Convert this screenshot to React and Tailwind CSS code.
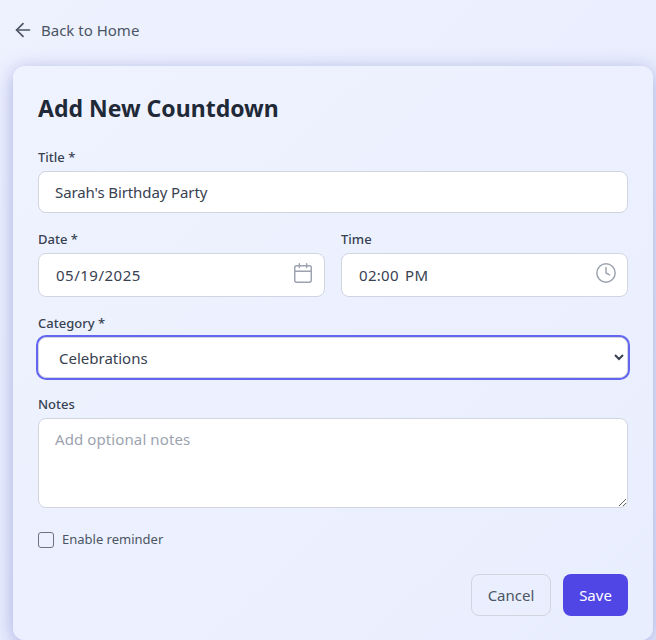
import { ArrowLeft, Calendar, Clock } from 'lucide-react';

const inputClass = "w-full h-[42px] px-4 bg-white border border-[#d1d5e0] rounded-lg text-[15px] text-[#374151] outline-none";

export default function App() {
  return (
    <div className="h-[640px] overflow-hidden bg-gradient-to-br from-[#eef2ff] to-[#e6ebfd] pl-[13px] pr-[3px] font-['Noto_Sans',sans-serif]">
      <a href="#" className="h-[66px] flex items-center gap-[7px] -ml-[1px] pb-[6px] text-[15px] text-[#4b5563]">
        <ArrowLeft size={22} strokeWidth={1.9} className="text-[#4b5563]" />
        <span>Back to Home</span>
      </a>

      <div className="h-[574px] px-[25px] pt-[26px] rounded-xl bg-gradient-to-br from-[#eff3ff] to-[#e9eefe] shadow-[0_4px_20px_rgba(70,80,180,0.42)]">
        <h1 className="text-[23px] leading-8 font-bold text-[#1f2937] mb-[23px]">Add New Countdown</h1>

        <form className="flex flex-col gap-4">
          <div>
            <label className="block text-[13px] leading-5 font-medium text-[#374151] mb-1">Title *</label>
            <input type="text" defaultValue="Sarah's Birthday Party" className={`${inputClass} tracking-[-0.1px]`} />
          </div>

          <div className="grid grid-cols-2 gap-4">
            <div>
              <label className="block text-[13px] leading-5 font-medium text-[#374151] mb-1">Date *</label>
              <div className="relative">
                <input type="text" defaultValue="05/19/2025" className={`${inputClass} !h-11 pl-[17px] tracking-[0.5px]`} />
                <Calendar size={22} strokeWidth={1.6} className="absolute right-[11px] top-[9px] text-[#9ca3af]" />
              </div>
            </div>
            <div>
              <label className="block text-[13px] leading-5 font-medium text-[#374151] mb-1">Time</label>
              <div className="relative">
                <input type="text" defaultValue="02:00 PM" className={`${inputClass} !h-11 pl-[17px] tracking-[0.3px] [word-spacing:2px]`} />
                <Clock size={22} strokeWidth={1.6} className="absolute right-[11px] top-[9px] text-[#9ca3af]" />
              </div>
            </div>
          </div>

          <div>
            <label className="block text-[13px] leading-5 font-medium text-[#374151] mb-1">Category *</label>
            <select defaultValue="Celebrations" className={`${inputClass} !h-[41px] ring-2 ring-[#6366f1]`}>
              <option>Celebrations</option>
              <option>Birthdays</option>
              <option>Holidays</option>
            </select>
          </div>

          <div>
            <label className="block text-[13px] leading-5 font-medium text-[#374151] mb-1">Notes</label>
            <textarea placeholder="Add optional notes" className="block w-full h-[90px] px-4 py-[9px] bg-white border border-[#d1d5e0] rounded-lg text-[15px] tracking-[0.1px] text-[#374151] placeholder:text-[#9ca3af] outline-none"></textarea>
          </div>

          <label className="flex items-center gap-2 mt-[6px] h-5 text-[13px] text-[#4b5563]">
            <input type="checkbox" className="appearance-none w-4 h-4 border border-[#6b7280] rounded-[3px] bg-transparent" />
            <span>Enable reminder</span>
          </label>

          <div className="flex justify-end gap-3 mt-2">
            <button type="button" className="w-20 h-[42px] rounded-lg border border-[#d1d5e0] text-[15px] text-[#4b5563]">Cancel</button>
            <button type="button" className="w-[65px] h-[42px] rounded-lg bg-[#4f46e5] text-[15px] text-white">Save</button>
          </div>
        </form>
      </div>
    </div>
  );
}
